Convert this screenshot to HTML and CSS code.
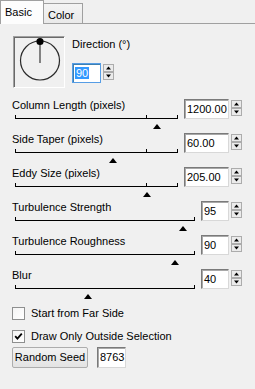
FILE: index.html
```html
<!DOCTYPE html>
<html>
<head>
<meta charset="utf-8">
<link rel="stylesheet" href="styles.css">
</head>
<body>
<div class="window">
  <div class="tabs">
    <div class="tab tab-active">Basic</div>
    <div class="tab tab-idle">Color</div>
  </div>
  <div class="panel">
    <div class="direction">
      <div class="dial">
        <svg width="50" height="50" viewBox="0 0 50 50">
          <circle cx="26" cy="23.5" r="19.5" fill="none" stroke="#2a2a2a" stroke-width="1.2"/>
          <line x1="26" y1="5" x2="26" y2="26" stroke="#666" stroke-width="1.6"/>
          <circle cx="26" cy="4.5" r="3.6" fill="#000"/>
        </svg>
      </div>
      <div class="dir-controls">
        <div class="label">Direction (°)</div>
        <div class="field-group dir-group">
          <div class="field field-dir field-focus"><span class="sel">90</span></div>
          <svg class="spin" width="11" height="16" viewBox="0 0 11 16"><rect x="0.5" y="0.5" width="10" height="7" fill="#ebebeb" stroke="#acacac"/><rect x="0.5" y="8.5" width="10" height="7" fill="#ebebeb" stroke="#acacac"/><path d="M3 5.5h5L5.5 2.5z" fill="#000"/><path d="M3 10.5h5l-2.5 3z" fill="#000"/></svg>
        </div>
      </div>
    </div>

    <div class="rows">
      <div class="row">
        <div class="slider-col">
          <div class="label">Column Length (pixels)</div>
          <div class="track"><div class="track-line"><span class="tick" style="left:130px"></span></div><span class="thumb" style="left:138px"></span></div>
        </div>
        <div class="field-group"><div class="field field-wide">1200.00</div><svg class="spin" width="11" height="16" viewBox="0 0 11 16"><rect x="0.5" y="0.5" width="10" height="7" fill="#ebebeb" stroke="#acacac"/><rect x="0.5" y="8.5" width="10" height="7" fill="#ebebeb" stroke="#acacac"/><path d="M3 5.5h5L5.5 2.5z" fill="#000"/><path d="M3 10.5h5l-2.5 3z" fill="#000"/></svg></div>
      </div>
      <div class="row">
        <div class="slider-col">
          <div class="label">Side Taper (pixels)</div>
          <div class="track"><div class="track-line"><span class="tick" style="left:130px"></span></div><span class="thumb" style="left:94px"></span></div>
        </div>
        <div class="field-group"><div class="field field-wide">60.00</div><svg class="spin" width="11" height="16" viewBox="0 0 11 16"><rect x="0.5" y="0.5" width="10" height="7" fill="#ebebeb" stroke="#acacac"/><rect x="0.5" y="8.5" width="10" height="7" fill="#ebebeb" stroke="#acacac"/><path d="M3 5.5h5L5.5 2.5z" fill="#000"/><path d="M3 10.5h5l-2.5 3z" fill="#000"/></svg></div>
      </div>
      <div class="row">
        <div class="slider-col">
          <div class="label">Eddy Size (pixels)</div>
          <div class="track"><div class="track-line"><span class="tick" style="left:130px"></span></div><span class="thumb" style="left:128px"></span></div>
        </div>
        <div class="field-group"><div class="field field-wide">205.00</div><svg class="spin" width="11" height="16" viewBox="0 0 11 16"><rect x="0.5" y="0.5" width="10" height="7" fill="#ebebeb" stroke="#acacac"/><rect x="0.5" y="8.5" width="10" height="7" fill="#ebebeb" stroke="#acacac"/><path d="M3 5.5h5L5.5 2.5z" fill="#000"/><path d="M3 10.5h5l-2.5 3z" fill="#000"/></svg></div>
      </div>
      <div class="row">
        <div class="slider-col">
          <div class="label">Turbulence Strength</div>
          <div class="track"><div class="track-line"></div><span class="thumb" style="left:164px"></span></div>
        </div>
        <div class="field-group"><div class="field field-narrow">95</div><svg class="spin" width="11" height="16" viewBox="0 0 11 16"><rect x="0.5" y="0.5" width="10" height="7" fill="#ebebeb" stroke="#acacac"/><rect x="0.5" y="8.5" width="10" height="7" fill="#ebebeb" stroke="#acacac"/><path d="M3 5.5h5L5.5 2.5z" fill="#000"/><path d="M3 10.5h5l-2.5 3z" fill="#000"/></svg></div>
      </div>
      <div class="row">
        <div class="slider-col">
          <div class="label">Turbulence Roughness</div>
          <div class="track"><div class="track-line"></div><span class="thumb" style="left:156px"></span></div>
        </div>
        <div class="field-group"><div class="field field-narrow">90</div><svg class="spin" width="11" height="16" viewBox="0 0 11 16"><rect x="0.5" y="0.5" width="10" height="7" fill="#ebebeb" stroke="#acacac"/><rect x="0.5" y="8.5" width="10" height="7" fill="#ebebeb" stroke="#acacac"/><path d="M3 5.5h5L5.5 2.5z" fill="#000"/><path d="M3 10.5h5l-2.5 3z" fill="#000"/></svg></div>
      </div>
      <div class="row">
        <div class="slider-col">
          <div class="label">Blur</div>
          <div class="track"><div class="track-line"></div><span class="thumb" style="left:69px"></span></div>
        </div>
        <div class="field-group"><div class="field field-narrow">40</div><svg class="spin" width="11" height="16" viewBox="0 0 11 16"><rect x="0.5" y="0.5" width="10" height="7" fill="#ebebeb" stroke="#acacac"/><rect x="0.5" y="8.5" width="10" height="7" fill="#ebebeb" stroke="#acacac"/><path d="M3 5.5h5L5.5 2.5z" fill="#000"/><path d="M3 10.5h5l-2.5 3z" fill="#000"/></svg></div>
      </div>
    </div>

    <div class="check-row first-check">
      <span class="checkbox"></span>
      <span class="check-label">Start from Far Side</span>
    </div>
    <div class="check-row second-check">
      <span class="checkbox"><svg width="11" height="11" viewBox="0 0 11 11"><path d="M2.2 5.2 L4.4 7.6 L8.8 2.6" fill="none" stroke="#000" stroke-width="1.8"/></svg></span>
      <span class="check-label">Draw Only Outside Selection</span>
    </div>
    <div class="seed-row">
      <div class="button">Random Seed</div>
      <div class="field field-seed">8763</div>
    </div>
  </div>
</div>
</body>
</html>
```
FILE: styles.css
```css
html, body {
  margin: 0;
  padding: 0;
}
body {
  width: 255px;
  height: 389px;
  overflow: hidden;
  background: #f0f0f0;
  font-family: "Liberation Sans", Arial, sans-serif;
  font-size: 11px;
  line-height: 13px;
  color: #000;
}
.window {
  width: 255px;
  height: 389px;
}
.tabs {
  display: flex;
  align-items: flex-end;
  height: 23px;
}
.tab {
  box-sizing: border-box;
  padding-left: 4px;
}
.tab-active {
  width: 44px;
  height: 24px;
  margin-bottom: -1px;
  position: relative;
  z-index: 1;
  background: #fdfdfd;
  border: 1px solid #a0a0a0;
  border-bottom: none;
  padding-top: 5px;
}
.tab-idle {
  width: 39px;
  height: 20px;
  background: linear-gradient(#f4f4f4, #e9e9e9);
  border: 1px solid #a0a0a0;
  border-left: none;
  border-bottom: none;
  padding-top: 5px;
}
.panel {
  border-top: 1px solid #a0a0a0;
  padding-top: 12px;
}
.direction {
  display: flex;
  padding-left: 13px;
}
.dial {
  box-sizing: border-box;
  width: 52px;
  height: 52px;
  border: 1px solid;
  border-color: #a0a0a0 #ffffff #ffffff #a0a0a0;
  box-shadow: inset 1px 1px #696969;
  background: #f0f0f0;
}
.dial svg {
  display: block;
}
.dir-controls {
  margin-left: 7px;
  padding-top: 2px;
}
.dir-group {
  margin-top: 12px;
}
.field-group {
  display: flex;
  align-items: flex-start;
  gap: 2px;
}
.spin {
  display: block;
  margin-top: 1px;
}
.field {
  box-sizing: border-box;
  height: 20px;
  background: #fff;
  border: 1px solid;
  border-color: #7a7a7a #d8d8d8 #d8d8d8 #7a7a7a;
  box-shadow: inset 1px 1px #a8a8a8;
  padding-left: 2px;
  line-height: 18px;
  white-space: nowrap;
  overflow: hidden;
}
.field-dir {
  width: 29px;
}
.field-focus {
  border-color: #569de5;
  box-shadow: inset 1px 1px #3c7fb1;
}
.sel {
  background: #3399ff;
  color: #fff;
  padding: 0 1px;
}
.field-wide {
  width: 45px;
}
.field-narrow {
  width: 28px;
}
.rows {
  margin-top: 11px;
}
.row {
  display: flex;
  height: 34px;
  padding-left: 12px;
  padding-right: 13px;
}
.slider-col {
  flex: 1;
  margin-right: 6px;
}
.track {
  position: relative;
  margin-left: 3px;
  height: 21px;
}
.track-line {
  position: relative;
  box-sizing: border-box;
  margin-top: 3px;
  height: 4px;
  border: 1px solid #000;
  border-top: none;
}
.tick {
  position: absolute;
  top: 0;
  width: 1px;
  height: 3px;
  background: #000;
}
.thumb {
  position: absolute;
  top: 9px;
  width: 0;
  height: 0;
  border-left: 4.5px solid transparent;
  border-right: 4.5px solid transparent;
  border-bottom: 5px solid #000;
}
.check-row {
  display: flex;
  align-items: center;
  gap: 6px;
  padding-left: 12px;
  height: 13px;
}
.first-check {
  margin-top: 4px;
}
.second-check {
  margin-top: 10px;
}
.checkbox {
  box-sizing: border-box;
  width: 13px;
  height: 13px;
  border: 1px solid #8e8f8f;
  background: linear-gradient(135deg, #f4f4f4, #ffffff);
  display: flex;
  align-items: center;
  justify-content: center;
}
.checkbox svg {
  display: block;
}
.seed-row {
  display: flex;
  gap: 9px;
  padding-left: 12px;
  margin-top: 4px;
}
.button {
  box-sizing: border-box;
  width: 76px;
  height: 21px;
  border: 1px solid #adadad;
  border-radius: 2px;
  background: linear-gradient(#f2f2f2, #e3e3e3);
  text-align: center;
  line-height: 19px;
}
.field-seed {
  width: 29px;
  height: 21px;
  line-height: 19px;
}
```
